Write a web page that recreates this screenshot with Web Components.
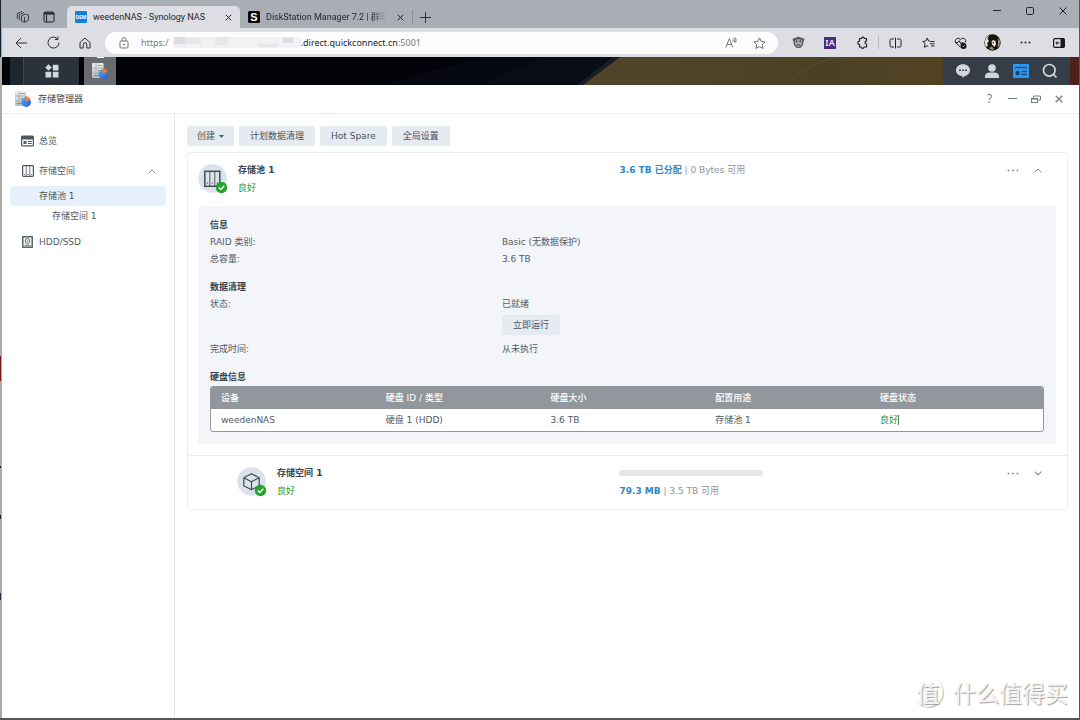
<!DOCTYPE html>
<html lang="zh-CN">
<head>
<meta charset="utf-8">
<meta name="viewport" content="width=device-width, initial-scale=1">
<title>weedenNAS - Synology NAS</title>
<style>
  html, body { margin: 0; min-height: 100%; }
  body {
    --ui: "DejaVu Sans", "Noto Sans CJK SC", sans-serif;
    --chrome: "Noto Sans", "Noto Sans CJK SC", sans-serif;
    --tab: Roboto, "Noto Sans CJK SC", sans-serif;
    --ink: #505a64; --strong: #3a434d; --blue: #2d87c3; --green: #1f9a2b; --mute: #8f9499;
    font: 9px/18px var(--ui); color: var(--ink);
  }
</style>
</head>
<body>
<nas-desktop></nas-desktop>

<script>
const ICONS = {
  stack: '<svg width="14" height="14" viewBox="0 0 14 14" fill="none" stroke="#303338" stroke-width=".9" stroke-linejoin="round"><path d="M5.500 5.800 9.500 4l3 1.300v5L8.500 12.300l-3-1.300z M3.300 10V4.600L8 2.500 M1.300 8.800V3.600L6 1.400 M8.500 7v5"/></svg>',
  panel: '<svg width="12" height="12" viewBox="0 0 12 12" fill="none" stroke="#1d2023"><rect x="1" y="1" width="10" height="10" rx="1.500"/><path d="M1 2.500h10" stroke-width="2"/><path d="M3.500 4v7"/></svg>',
  back: '<svg width="13" height="12" viewBox="0 0 13 12" fill="none" stroke="#2b2d30"><path d="M12 6H1.500M6 1 1 6l5 5"/></svg>',
  reload: '<svg width="13" height="13" viewBox="0 0 13 13" fill="none" stroke="#2b2d30"><path d="M12 6.500a5.500 5.500 0 1 1-1.800-4M11 .5v3H8"/></svg>',
  home: '<svg width="12" height="12" viewBox="0 0 12 12" fill="none" stroke="#2b2d30"><path d="M1 5.500 6 1l5 4.500V11H7.800V7.500a1.800 1.800 0 0 0-3.600 0V11H1z" stroke-linejoin="round"/></svg>',
  lock: '<svg width="10" height="12" viewBox="0 0 10 12" fill="none" stroke="#6c6e71"><rect x="1" y="4" width="8" height="7" rx="1.200"/><path d="M3 4V2.600a2 2 0 0 1 4 0V4"/><circle cx="5" cy="7.500" r=".5" fill="#6c6e71"/></svg>',
  read: '<svg width="12" height="11" viewBox="0 0 12 11" fill="none" stroke="#6c6e71" stroke-width=".9"><path d="M.8 10.500 4.300 1.500l3.500 9M2 7.500h4.600M7.500 2.500q1 1 .3 2.200M8.500 1q2 1.800.8 4.300M10 .3q2 2.500.6 5.500"/></svg>',
  star: '<svg width="13" height="12" viewBox="0 0 13 12" fill="none" stroke="#6c6e71"><path d="m6.500.9 1.700 3.500 3.900.5-2.800 2.700.7 3.800-3.500-1.800L3 11.400l.7-3.800L.9 4.900l3.900-.5z" stroke-linejoin="round"/></svg>',
  monkey: '<svg width="13" height="13" viewBox="0 0 13 13"><path d="M.7 3q1-1.500 2-.8Q6.500-.8 10.300 2.200q1-.7 2 .8.200 1.800-.8 2.600Q11.500 12 6.500 12.300 1.500 12 1.500 5.600.5 4.800.7 3z" fill="#595b5e"/><path d="M3 4.500q3.500-2.300 7 0v3q-1 3.500-3.500 3.500T3 7.500z" fill="#a9abae"/><path d="M4 4.500h1.500v1.800H4zM7.500 4.500H9v1.800H7.500zM4.500 8.500h4v1h-4z" fill="#3b3d40"/></svg>',
  ia: '<svg width="12" height="12" viewBox="0 0 12 12"><rect width="12" height="12" fill="#4b2c7c"/><text x="6" y="9" text-anchor="middle" font-family="Noto Sans, sans-serif" font-size="9" font-weight="600" fill="#f2eefa">IA</text></svg>',
  puzzle: '<svg width="12" height="13" viewBox="0 0 12 13" fill="none" stroke="#232528" stroke-width="1.200"><path d="M3.500 2.500h2a1.400 1.400 0 0 1 2.800 0H10.500V5a1.500 1.500 0 1 0 0 3v3H8a1.400 1.400 0 0 1-2.800 0H3.500V8.500a1.600 1.600 0 1 1 0-3.400z" stroke-linejoin="round"/></svg>',
  split: '<svg width="13" height="12" viewBox="0 0 13 12" fill="none" stroke="#232528"><path d="M5 2H2.200Q1 2 1 3.200v5.600Q1 10 2.200 10H5M8 2h2.800Q12 2 12 3.200v5.600Q12 10 10.800 10H8M6.500.5v11"/></svg>',
  favs: '<svg width="13" height="12" viewBox="0 0 13 12" fill="none" stroke="#232528"><path d="M8.200 4.300 6.600 4 5.200 1 3.800 4 .8 4.500 3 6.800l-.6 3.500 2.800-1.500 1 .5M8.500 4.500h4M8 6.800h4.500M9 9h3.500" stroke-linejoin="round"/></svg>',
  heart: '<svg width="13" height="12" viewBox="0 0 13 12"><path d="M6.500 10.200 1.700 5.600a2.700 2.700 0 0 1 4.800-3 2.700 2.700 0 0 1 4.800 3M1 5.500h3l1.200-1.800L7 7l1-1.500h1.500" fill="none" stroke="#232528"/><circle cx="9.500" cy="9" r="3" fill="#111"/><path d="m8.300 9 1 1 1.600-2" stroke="#dfe0e4" fill="none" stroke-width=".7"/></svg>',
  avatar: '<svg width="17" height="17" viewBox="0 0 17 17"><circle cx="8.500" cy="8.500" r="8.200" fill="#17130f"/><path d="M1 7Q2 3 5 1.500L3.500 5 5 7 3 9.500l1 2L2 13Q.3 10 1 7zM7.500 7.500 9 6l2.500 1 .5 3.500L10.500 13 8 10.500z" fill="#e9e4d4"/><path d="M14 4l2 3-.5 5-2 1.500.5-4zM5 14l3-1.500 2 3q-3 1-5-1.500z" fill="#9c967f"/><path d="m8.500 9 1.500-.6" stroke="#222"/></svg>',
  dots: '<svg width="11" height="3" viewBox="0 0 11 3" fill="#2b2d30"><circle cx="1.500" cy="1.500" r="1"/><circle cx="5.500" cy="1.500" r="1"/><circle cx="9.500" cy="1.500" r="1"/></svg>',
  sidepanel: '<svg width="12" height="10" viewBox="0 0 12 10"><rect x=".6" y=".6" width="10.800" height="8.800" rx="1.500" fill="none" stroke="#16181a" stroke-width="1.200"/><path d="M7.500 0H10.500L12 1.500v7L10.500 10h-3z" fill="#16181a"/><path d="M6.500 5H3M4.500 3.300 2.800 5l1.700 1.700" stroke="#16181a" fill="none"/></svg>',
  x: '<svg width="7" height="7" viewBox="0 0 7 7" fill="none" stroke="#222529"><path d="m.7.7 5.600 5.600M6.300.7.700 6.300"/></svg>',
  plus: '<svg width="11" height="11" viewBox="0 0 11 11" fill="none" stroke="#303338"><path d="M0 5.500h11M5.500 0v11"/></svg>',
  min: '<svg width="8" height="2" viewBox="0 0 8 2" fill="#222529"><path d="M0 0h8v1H0z"/></svg>',
  max: '<svg width="8" height="8" viewBox="0 0 8 8" fill="none" stroke="#222529"><rect x=".5" y=".5" width="7" height="7" rx="1.200"/></svg>',
  close: '<svg width="8" height="8" viewBox="0 0 8 8" fill="none" stroke="#222529"><path d="m.5.5 7 7M7.500.5l-7 7"/></svg>',
  dsm: '<svg width="12" height="12" viewBox="0 0 12 12"><rect width="12" height="12" rx="1" fill="#0f7fe0"/><text x="6" y="8" text-anchor="middle" font-family="Noto Sans, sans-serif" font-size="5" font-weight="700" fill="#fff">DSM</text></svg>',
  syno: '<svg width="12" height="12" viewBox="0 0 12 12"><rect width="12" height="12" rx="1.500" fill="#050505"/><text x="6" y="10" text-anchor="middle" font-family="Liberation Sans, sans-serif" font-size="11" font-weight="700" fill="#fff">S</text></svg>',
  apps: '<svg width="14" height="14" viewBox="0 0 14 14" fill="#d3d8df"><path d="M3.500.2 6.800 3.500 3.500 6.800.200 3.500z"/><rect x="7.800" y=".8" width="5.700" height="5.700" rx=".6"/><rect x=".5" y="7.800" width="5.700" height="5.700" rx=".6"/><rect x="7.800" y="7.800" width="5.700" height="5.700" rx=".6"/></svg>',
  storage: '<svg width="16" height="16" viewBox="0 0 16 16"><defs><linearGradient id="g" x2="0" y2="1"><stop stop-color="#eceef0"/><stop offset="1" stop-color="#b9bdc2"/></linearGradient><linearGradient id="b" x2="1" y2="1"><stop stop-color="#28c0ee"/><stop offset="1" stop-color="#3b4fdd"/></linearGradient></defs><rect x="0" y="0" width="11.500" height="15" rx="1.200" fill="url(#g)"/><path d="M0 5h11.500M0 10h11.500M4 0v15" stroke="#a4a8ad" stroke-width=".8"/><path d="M5.500 2.500h3M5.500 7.500h3M1.500 12.500h6" stroke="#8d9298"/><path d="M9 2.500h1M9 7.500h1" stroke="#52c25b"/><circle cx="11.200" cy="11.200" r="4.800" fill="url(#b)"/><path d="M11.200 11.200 9.500 5.500q3.500-1.200 6 2.500z" fill="#f47d35"/></svg>',
  chat: '<svg width="16" height="16" viewBox="0 0 16 16"><path d="M8 1.200c4 0 7 2.600 7 6 0 3-2.200 5-5 5.700L7.500 15v-2C3.700 12.900 1 10.500 1 7.200c0-3.400 3-6 7-6z" fill="#d3d7dc"/><path d="M4 6.500h2v1.600H4zM7 6.500h2v1.600H7zM10 6.500h2v1.600h-2z" fill="#404851"/></svg>',
  user: '<svg width="16" height="16" viewBox="0 0 16 16" fill="#d3d7dc"><circle cx="8" cy="5" r="3.800"/><path d="M1 15v-2.200Q2 9.500 5.500 9.500h5q3.500 0 4.500 3.300V15z"/></svg>',
  widget: '<svg width="16" height="16" viewBox="0 0 16 16"><rect y="1" width="16" height="14" rx="1" fill="#2f96f3"/><path d="M2 4.500h12" stroke="#26507c" stroke-width="1.500"/><circle cx="4.700" cy="10" r="2.200" fill="#243d59"/><path d="M8.500 8.500H14M8.500 11.500H14" stroke="#26507c" stroke-width="1.400"/></svg>',
  search: '<svg width="16" height="16" viewBox="0 0 16 16" fill="none" stroke="#d3d7dc" stroke-width="1.700"><circle cx="7.300" cy="7.300" r="5.800"/><path d="m11.500 11.500 3 3"/></svg>',
  wmin: '<svg width="9" height="2" viewBox="0 0 9 2"><path d="M0 0h9v1H0z" fill="#757d88"/></svg>',
  wrest: '<svg width="10" height="8" viewBox="0 0 10 8" fill="none" stroke="#757d88"><rect x=".5" y="3.500" width="6" height="4"/><path d="M2.500 3V1h7v4H7M.5 4h6"/></svg>',
  wclose: '<svg width="8" height="8" viewBox="0 0 8 8" fill="none" stroke="#757d88" stroke-width="1.300"><path d="m.7.7 6.600 6.600M7.300.7.700 7.300"/></svg>',
  overview: '<svg width="13" height="12" viewBox="0 0 13 12"><rect x=".6" y="1.100" width="11.800" height="9.800" rx="1" fill="none" stroke="#4d5661" stroke-width="1.200"/><path d="M1 1h11v3.500H1z" fill="#4d5661"/><path d="M2.500 6h3v3h-3zM7 6h3.800v1H7zM7 8h3.800v1H7z" fill="#4d5661"/></svg>',
  bays: '<svg width="12" height="12" viewBox="0 0 12 12" fill="none" stroke="#4d5661"><rect x=".6" y=".6" width="10.800" height="10.800" rx="1" stroke-width="1.200"/><path d="M4.200 1v10M7.800 1v10M2 9.500h1M5.500 9.500h1M9 9.500h1" stroke-width=".8"/></svg>',
  disk: '<svg width="11" height="12" viewBox="0 0 11 12"><rect x=".8" y=".8" width="9.400" height="10.400" fill="none" stroke="#4d5661" stroke-width="1.400"/><circle cx="5.500" cy="5" r="2.400" fill="none" stroke="#4d5661" stroke-width=".9"/><circle cx="5.500" cy="5" r=".8" fill="#4d5661"/><path d="M2.500 9.200h6" stroke="#4d5661"/></svg>',
  up: '<svg width="8" height="5" viewBox="0 0 8 5" fill="none" stroke="#8a9098"><path d="m.7 4.300L4 1l3.300 3.300"/></svg>',
  down: '<svg width="8" height="5" viewBox="0 0 8 5" fill="none" stroke="#8a9098" stroke-width="1.200"><path d="m.7.700L4 4 7.300.7"/></svg>',
  more: '<svg width="12" height="3" viewBox="0 0 12 3" fill="#8a9098"><circle cx="1.500" cy="1.500" r="1"/><circle cx="6" cy="1.500" r="1"/><circle cx="10.500" cy="1.500" r="1"/></svg>',
  caret: '<svg width="5" height="3" viewBox="0 0 5 3"><path d="M0 0h5L2.500 3z" fill="#4d5661"/></svg>',
  pool: '<svg width="30" height="30" viewBox="0 0 30 30"><circle cx="14.500" cy="14.500" r="14.300" fill="#dbe2ea"/><g fill="none" stroke="#414c59"><rect x="6.800" y="7.300" width="15" height="15" stroke-width="1.500"/><path d="M11.800 7.500v14.500M16.800 7.500v14.500" stroke-width=".9"/><path d="M8.700 19h1.300M13.700 19H15M18.700 19H20"/></g><circle cx="23.500" cy="23.500" r="5.700" fill="#21a52c"/><path d="m20.800 23.400 2 2 3.500-3.700" fill="none" stroke="#fff" stroke-width="1.400"/></svg>',
  volume: '<svg width="30" height="30" viewBox="0 0 30 30"><circle cx="14.500" cy="14.500" r="14.300" fill="#dbe2ea"/><path d="m14.500 6.700 7.700 4v8l-7.700 4-7.700-4v-8z M6.800 10.700l7.700 4 7.700-4 M14.500 14.700v8" fill="none" stroke="#414c59" stroke-width="1.200" stroke-linejoin="round"/><circle cx="23.500" cy="23.500" r="5.700" fill="#21a52c"/><path d="m20.800 23.400 2 2 3.500-3.700" fill="none" stroke="#fff" stroke-width="1.400"/></svg>'
};

const define = (name, render) => customElements.define(name, class extends HTMLElement {
  connectedCallback() {
    if (this.shadowRoot) return;
    const t = document.createElement('template');
    t.innerHTML = render(this);
    this.attachShadow({ mode: 'open' }).append(t.content);
  }
});

define('ui-icon', el => `
  <style>:host{display:inline-flex;flex:none;align-items:center;justify-content:center}svg{display:block}</style>
  ${ICONS[el.getAttribute('name')]}`);

define('icon-button', el => `
  <style>
    :host{display:flex;flex:none;width:32px;height:22px}
    :host([size="33"]){width:33px} :host([size="29"]){width:29px} :host([size="23"]){width:23px} :host([size="16"]){width:16px}
    :host([size="25"]){width:25px;height:18px}
    button{all:unset;flex:1;display:flex;align-items:center;justify-content:center;color:#757d88;font:12px/18px "Noto Sans",sans-serif}
  </style>
  <button type="button" aria-label="${el.getAttribute('label')}"><slot><ui-icon name="${el.getAttribute('name')}"></ui-icon></slot></button>`);

define('browser-tab', el => `
  <style>
    :host{display:flex;align-items:center;box-sizing:border-box;flex:0 1 172px;min-width:0;height:22px;padding:0 4px 0 8px;gap:6px;color:#24272b;font:9px/18px var(--tab)}
    :host([active]){background:#dcdee3;border-radius:5px 5px 0 0;flex-basis:173px}
    a{flex:1;min-width:0;overflow:hidden;white-space:nowrap;color:inherit;text-decoration:none}
    :host([fade]) a{-webkit-mask:linear-gradient(90deg,#000 88%,transparent)}
  </style>
  <ui-icon name="${el.getAttribute('icon')}"></ui-icon><a href="#"><slot></slot></a>
  <icon-button size="16" name="x" label="关闭标签页"></icon-button>`);

define('browser-strip', () => `
  <style>
    :host{display:flex;align-items:flex-end;height:28px;background:#a9aeb5;padding-left:2px}
    .lead{display:flex;width:63px;height:22px;align-items:center;justify-content:space-evenly}
    i{align-self:center;margin-top:6px;width:1px;height:14px;background:#888d94}
    .new{height:22px}
    .win{display:flex;margin-left:auto;align-self:flex-start}
  </style>
  <div class="lead"><ui-icon name="stack"></ui-icon><ui-icon name="panel"></ui-icon></div>
  <browser-tab active icon="dsm">weedenNAS - Synology NAS</browser-tab>
  <browser-tab fade icon="syno">DiskStation Manager 7.2 | 群晖科技</browser-tab>
  <i></i><icon-button class="new" size="25" name="plus" label="新建标签页"></icon-button>
  <div class="win"><icon-button size="33" name="min" label="最小化"></icon-button><icon-button size="33" name="max" label="最大化"></icon-button><icon-button size="33" name="close" label="关闭"></icon-button></div>`);

define('address-bar', () => `
  <style>
    :host{display:flex;flex:1;min-width:0;align-items:center;box-sizing:border-box;height:22px;margin:0 4px;padding:0 4px 0 14px;border-radius:11px;background:#fdfdfe;font:9px/18px var(--chrome);color:#77797d}
    span,input{flex:none;font:inherit}
    .scheme{margin-left:12px}
    input{border:0;padding:0;margin:0;background:none;color:#222528;field-sizing:content;outline:0}
    .mask{display:block;margin:0 0 2px 4px}
    .end{display:flex;margin-left:auto}
  </style>
  <ui-icon name="lock"></ui-icon><span class="scheme">https:/</span>
  <svg class="mask" width="128" height="12" viewBox="0 0 128 12"><rect width="128" height="11" y="1" rx="4" fill="#f1f2f3"/><path d="M1 1h11v7H1zM110 2h10v5h-10z" fill="#dcdde0"/><path d="M12 2h16v6H12zM42 1h13v8H42zM85 8h20v3H85z" fill="#e6e7e9"/></svg>
  <input aria-label="地址" value=".direct.quickconnect.cn"><span>:5001</span>
  <div class="end"><icon-button size="29" name="read" label="大声朗读"></icon-button><icon-button size="29" name="star" label="收藏"></icon-button></div>`);

define('browser-toolbar', () => `
  <style>:host{display:flex;align-items:center;height:29px;padding:0 4px 0 3px;background:#dcdee3}i{width:1px;height:13px;background:#b3b6bb}</style>
  <icon-button name="back" label="后退"></icon-button><icon-button name="reload" label="刷新"></icon-button><icon-button name="home" label="主页"></icon-button>
  <address-bar></address-bar>
  <icon-button name="monkey" label="扩展"></icon-button><icon-button name="ia" label="扩展 IA"></icon-button><icon-button name="puzzle" label="扩展管理"></icon-button><i></i>
  <icon-button size="33" name="split" label="拆分屏幕"></icon-button><icon-button name="favs" label="收藏夹"></icon-button><icon-button name="heart" label="浏览器概要"></icon-button>
  <icon-button size="33" name="avatar" label="个人资料"></icon-button><icon-button size="33" name="dots" label="设置"></icon-button><icon-button size="33" name="sidepanel" label="侧栏"></icon-button>`);

define('dsm-taskbar', () => `
  <style>
    :host{display:flex;position:relative;height:28px;background:#02040a;padding:0 9px 0 8px}
    .wall{position:absolute;inset:0;width:100%;height:100%}
    .show{width:13px;background:#20262f;border-right:1px solid #414751}
    .show,.menu,.app,.tray{position:relative;display:flex;align-items:center;justify-content:center}
    .menu{width:55px;background:#2c323c}
    .app{width:32px;margin-left:5px;background:#686c71}
    .app::before{content:"";position:absolute;top:0;left:13px;width:7px;height:1px;background:#fff}
    .tray{margin-left:auto;background:#353d48;padding:0 6px 0 5px}
  </style>
  <svg class="wall" viewBox="0 0 1077 28" preserveAspectRatio="none"><defs><linearGradient id="w"><stop stop-color="#51442a"/><stop offset=".5" stop-color="#4c4024"/><stop offset=".8" stop-color="#544322"/><stop offset="1" stop-color="#4a3c27"/></linearGradient></defs><path d="M380 28 480 0h150v28z" fill="#06090f"/><path d="M480 28 540 0h80l-40 28z" fill="#0a0d14"/><path d="M575 28 611 0h7l-37 28z" fill="#161f28"/><path d="M581 28 618 0h459v28z" fill="url(#w)"/><path d="M785 28q18-20 50-28" fill="none" stroke="#5a4e2e"/><path d="M1067 0h10v28h-10z" fill="#4d2118"/></svg>
  <div class="show"></div><div class="menu"><ui-icon name="apps"></ui-icon></div><div class="app"><ui-icon name="storage"></ui-icon></div>
  <div class="tray"><icon-button size="29" name="chat" label="通知"></icon-button><icon-button size="29" name="user" label="用户"></icon-button><icon-button size="29" name="widget" label="小工具"></icon-button><icon-button size="29" name="search" label="搜索"></icon-button></div>`);

define('app-titlebar', () => `
  <style>
    :host{display:flex;align-items:center;height:28px;padding:0 9px 0 13px;border-bottom:1px solid #e8eaec;background:#fff}
    h1{margin:0 auto 0 7px;font:9px/18px var(--ui);color:var(--strong)}
  </style>
  <ui-icon name="storage"></ui-icon><h1><slot></slot></h1>
  <icon-button size="23" label="帮助">?</icon-button><icon-button size="23" name="wmin" label="最小化"></icon-button><icon-button size="23" name="wrest" label="还原"></icon-button><icon-button size="23" name="wclose" label="关闭"></icon-button>`);

define('nav-item', el => `
  <style>
    :host{display:block}
    a{display:flex;align-items:center;height:20px;padding:0 10px 0 11px;border-radius:3px;color:var(--ink);text-decoration:none}
    ui-icon{width:13px;margin-right:5px}
    .end{margin:0 0 0 auto;width:8px}
    :host([level="1"]) a{padding-left:29px}
    :host([level="2"]) a{padding-left:42px}
    :host([selected]) a{background:#e6f1fc}
  </style>
  <a href="#">${el.hasAttribute('icon') ? `<ui-icon name="${el.getAttribute('icon')}"></ui-icon>` : ''}<slot></slot>${el.hasAttribute('open') ? '<ui-icon class="end" name="up"></ui-icon>' : ''}</a>`);

define('side-nav', () => `
  <style>
    :host{display:block;flex:none;box-sizing:border-box;width:173px;padding:17px 8px;border-right:1px solid #e6e8eb}
    .tree{padding:10px 0 6px}
    .tree nav-item[open]{margin-bottom:5px}
  </style>
  <nav><nav-item icon="overview">总览</nav-item>
    <div class="tree"><nav-item icon="bays" open>存储空间</nav-item><nav-item level="1" selected>存储池 1</nav-item><nav-item level="2">存储空间 1</nav-item></div>
    <nav-item icon="disk">HDD/SSD</nav-item></nav>`);

define('soft-button', el => `
  <style>
    :host{display:inline-flex}
    button{display:flex;align-items:center;gap:4px;height:20px;margin:0;padding:0 11px;border:0;border-radius:2px;background:#e6ebf1;color:#46515d;font:inherit;white-space:nowrap}
    :host([menu]) button{padding:0 10px}
  </style>
  <button type="button"><slot></slot>${el.hasAttribute('menu') ? '<ui-icon name="caret"></ui-icon>' : ''}</button>`);

define('unit-header', el => `
  <style>
    :host{display:grid;grid-template-columns:49% 1fr auto;padding:8px 17px 9px 10px}
    :host([nested]) .id{padding-left:39px}
    .id{display:flex;align-items:center}
    ui-icon{margin-right:10px}
    h2,p{margin:0;font-size:9px;line-height:18px}
    h2{font-weight:700;color:var(--strong)} p{color:var(--green)}
    .use{padding-left:4px;color:var(--mute)}
    .tools{display:flex;height:18px}
  </style>
  <div class="id"><ui-icon name="${el.getAttribute('icon')}"></ui-icon><div><h2><slot name="title"></slot></h2><p><slot name="state"></slot></p></div></div>
  <div class="use"><slot></slot></div>
  <div class="tools"><icon-button size="25" name="more" label="更多"></icon-button><icon-button size="25" name="${el.hasAttribute('open') ? 'up' : 'down'}" label="展开或收起"></icon-button></div>`);

define('usage-text', el => `
  <style>
    :host{display:block}
    .bar{height:6px;width:144px;margin:6px 0;border-radius:3px;background:#e6e6e7}
    b{color:var(--blue)}
  </style>
  ${el.hasAttribute('bar') ? '<div class="bar" role="progressbar" aria-valuenow="0" aria-label="已用容量"></div>' : ''}
  <div><b>${el.getAttribute('used')}</b> | <slot></slot></div>`);

define('info-section', el => `
  <style>:host{display:block;line-height:17px}h3{margin:0;font-size:9px;line-height:17px;color:var(--strong)}</style>
  <h3>${el.getAttribute('heading')}</h3><slot></slot>`);

define('info-row', el => `
  <style>
    :host{display:grid;grid-template-columns:35% 1fr}
    ::slotted(soft-button){display:flex;margin:2px 0 6px}
  </style>
  <span>${el.getAttribute('label')}:</span><div><slot></slot></div>`);

define('disk-table', () => `
  <style>
    :host{display:block;border:1px solid #92979e;border-radius:3px;background:#fff;overflow:hidden}
    table{width:100%;table-layout:fixed;border-collapse:collapse;line-height:18px}
    col.step{width:19.8%}
    th,td{padding:2px 10px;text-align:left}
    th{background:#92979e;color:#fff;font-weight:500}
    .ok{color:var(--green)}
    .ok span{border-right:1px solid #4a8a50}
  </style>
  <table><colgroup><col class="step"><col class="step"><col class="step"><col class="step"><col></colgroup>
    <thead><tr><th>设备</th><th>硬盘 ID / 类型</th><th>硬盘大小</th><th>配置用途</th><th>硬盘状态</th></tr></thead>
    <tbody><tr><td>weedenNAS</td><td>硬盘 1 (HDD)</td><td>3.6 TB</td><td>存储池 1</td><td class="ok"><span>良好</span></td></tr></tbody></table>`);

define('pool-card', () => `
  <style>
    :host{display:block;margin-top:6px;border:1px solid #ebedf0;border-radius:3px}
    .info{display:flex;flex-direction:column;gap:11px;margin:0 11px 11px 10px;padding:11px 12px 12px;border-radius:2px;background:#f4f5f9}
    unit-header[nested]{border-top:1px solid #ebedf0}
  </style>
  <unit-header icon="pool" open><span slot="title">存储池 1</span><span slot="state">良好</span><usage-text used="3.6 TB 已分配">0 Bytes 可用</usage-text></unit-header>
  <div class="info">
    <info-section heading="信息"><info-row label="RAID 类别">Basic (无数据保护)</info-row><info-row label="总容量">3.6 TB</info-row></info-section>
    <info-section heading="数据清理"><info-row label="状态">已就绪<soft-button>立即运行</soft-button></info-row><info-row label="完成时间">从未执行</info-row></info-section>
    <info-section heading="硬盘信息"><disk-table></disk-table></info-section>
  </div>
  <unit-header icon="volume" nested><span slot="title">存储空间 1</span><span slot="state">良好</span><usage-text bar used="79.3 MB">3.5 TB 可用</usage-text></unit-header>`);

define('storage-manager', () => `
  <style>
    :host{display:flex;flex-direction:column;flex:1;background:#fff}
    .body{display:flex;flex:1}
    main{flex:1;min-width:0;padding:12px 11px 12px 12px}
    .actions{display:flex;gap:5px}
  </style>
  <app-titlebar>存储管理器</app-titlebar>
  <div class="body"><side-nav></side-nav>
    <main><div class="actions"><soft-button menu>创建</soft-button><soft-button>计划数据清理</soft-button><soft-button>Hot Spare</soft-button><soft-button>全局设置</soft-button></div><pool-card></pool-card></main></div>`);

define('site-mark', () => `
  <style>
    :host{position:absolute;right:12px;bottom:12px;display:flex;align-items:center;gap:10px;color:#f4f4f4;text-shadow:1px 1px 1px #a0a0a0;font:23px/32px "Noto Sans CJK SC",sans-serif;pointer-events:none}
    b{display:flex;align-items:center;justify-content:center;box-sizing:border-box;width:30px;height:30px;border-radius:50%;box-shadow:1px 1px 1px #bbb;font-weight:500}
  </style>
  <b>值</b><span>什么值得买</span>`);

define('nas-desktop', () => `
  <style>
    :host{position:relative;display:flex;flex-direction:column;box-sizing:border-box;min-height:100vh;padding:0 1px 2px 2px;
      background:linear-gradient(#7a1720,#7a1720) 0 356px/1px 25px no-repeat,
        linear-gradient(#222,#222) 0 466px/1px 2px no-repeat,linear-gradient(#222,#222) 0 515px/1px 4px no-repeat,linear-gradient(#234,#234) 0 593px/1px 7px no-repeat,
        linear-gradient(#123,#123) 0 0/1px 57px no-repeat,linear-gradient(#aaa,#aaa) 0 0/2px calc(100% - 2px) no-repeat,#55565a}
  </style>
  <browser-strip></browser-strip><browser-toolbar></browser-toolbar><dsm-taskbar></dsm-taskbar><storage-manager></storage-manager><site-mark></site-mark>`);
</script>
</body>
</html>
